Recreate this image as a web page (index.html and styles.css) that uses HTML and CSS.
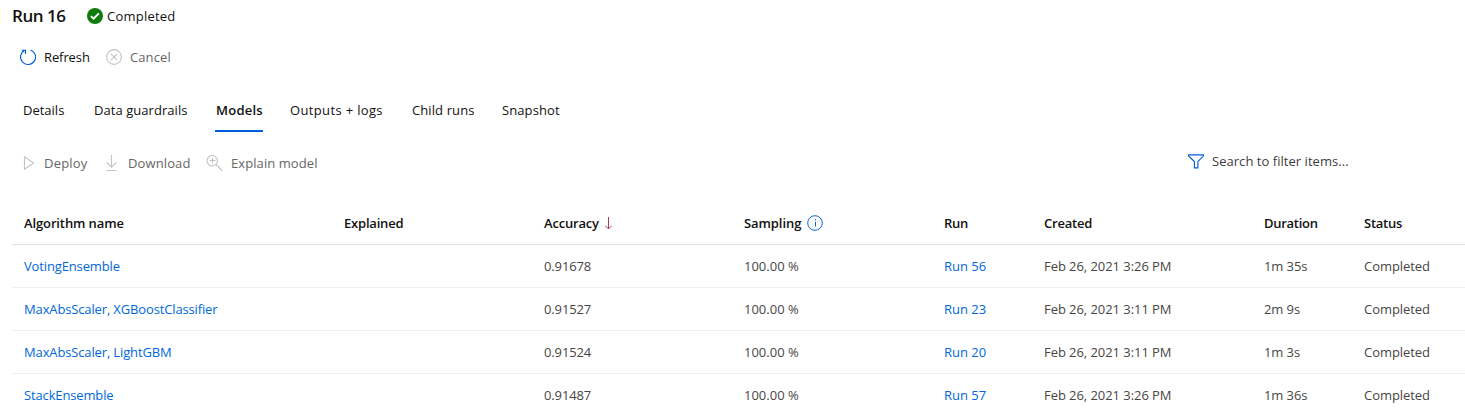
FILE: index.html
```html
<!DOCTYPE html>
<html lang="en">
<head>
<meta charset="utf-8">
<title>Run 16</title>
<link rel="stylesheet" href="styles.css">
</head>
<body>
<header class="title-bar">
  <h1 class="title">Run 16</h1>
  <svg class="status-icon" width="16" height="16" viewBox="0 0 16 16"><circle cx="8" cy="8" r="8" fill="#107c10"/><path d="M3.9 8.1l2.7 2.5 5.2-5.2" fill="none" stroke="#fff" stroke-width="1.9"/></svg>
  <span class="status-text">Completed</span>
</header>
<div class="toolbar run-actions">
  <button class="action refresh"><svg width="16" height="16" viewBox="0 0 16 16" fill="none" stroke="#015cda" stroke-width="1.1"><path d="M10.6.9A7.5 7.5 0 1 1 4.4 1.4M1.8 1.2h3.7v3.7"/></svg><span>Refresh</span></button>
  <button class="action cancel" disabled><svg width="16" height="16" viewBox="0 0 16 16" fill="none" stroke="#c4c4c4" stroke-width="1.1"><circle cx="8" cy="8" r="7.4"/><path d="M4.8 4.8l6.4 6.4M11.2 4.8l-6.4 6.4"/></svg><span>Cancel</span></button>
</div>
<nav class="tabs">
  <a class="tab details">Details</a>
  <a class="tab guardrails">Data guardrails</a>
  <a class="tab models active">Models</a>
  <a class="tab outputs">Outputs + logs</a>
  <a class="tab child">Child runs</a>
  <a class="tab snapshot">Snapshot</a>
</nav>
<div class="list-bar">
  <div class="toolbar">
    <button class="action deploy" disabled><svg width="16" height="16" viewBox="0 0 16 16" fill="none" stroke="#c4c4c4" stroke-width="1.1"><path d="M4.5 1.7v12.6L13.6 8z"/></svg><span>Deploy</span></button>
    <button class="action download" disabled><svg width="16" height="16" viewBox="0 0 16 16" fill="none" stroke="#c4c4c4" stroke-width="1.1"><path d="M8.5 0v12M3.6 7.2l4.9 4.9 4.9-4.9M3.5 15.5h10"/></svg><span>Download</span></button>
    <button class="action explain" disabled><svg width="17" height="16" viewBox="0 0 17 16" fill="none" stroke="#c4c4c4" stroke-width="1.1"><circle cx="6.2" cy="5.7" r="5.2"/><path d="M3.5 5.5h6M6.5 2.8v5.6M10 9.5l6 6"/></svg><span>Explain model</span></button>
  </div>
  <div class="filter"><svg width="16" height="15" viewBox="0 0 16 15" fill="none" stroke="#015cda" stroke-width="1.1"><path d="M.6.9h14.8v1L9.9 7.6v6.3H6.4V7.6L.6 1.9z"/></svg><span>Search to filter items...</span></div>
</div>
<main class="table">
  <div class="row head">
    <span class="h-name">Algorithm name</span><span class="h-explained">Explained</span>
    <span class="with-icon"><span class="h-accuracy">Accuracy</span><svg class="sort" width="8" height="13" viewBox="0 0 8 13" fill="none" stroke="#a4405c"><path d="M4.5 0v11.5M1.3 8.8l3.2 3.2 3-3.2"/></svg></span>
    <span class="with-icon"><span class="h-sampling">Sampling</span><svg class="info" width="16" height="16" viewBox="0 0 16 16" fill="none" stroke="#0a66cc"><circle cx="8" cy="8" r="7.3"/><path d="M8.5 6.7v4.8M8.5 4v1.3"/></svg></span>
    <span class="h-run">Run</span><span class="h-created">Created</span><span class="h-duration">Duration</span><span class="h-status">Status</span>
  </div>
  <div class="row"><a class="name">VotingEnsemble</a><span></span><span class="score">0.91678</span><span>100.00 %</span><a>Run 56</a><span class="date">Feb 26, 2021 3:26 PM</span><span class="time">1m 35s</span><span class="state">Completed</span></div>
  <div class="row"><a class="name">MaxAbsScaler, XGBoostClassifier</a><span></span><span class="score">0.91527</span><span>100.00 %</span><a>Run 23</a><span class="date">Feb 26, 2021 3:11 PM</span><span class="time">2m 9s</span><span class="state">Completed</span></div>
  <div class="row"><a class="name">MaxAbsScaler, LightGBM</a><span></span><span class="score">0.91524</span><span>100.00 %</span><a>Run 20</a><span class="date">Feb 26, 2021 3:11 PM</span><span class="time">1m 3s</span><span class="state">Completed</span></div>
  <div class="row"><a class="name">StackEnsemble</a><span></span><span class="score">0.91487</span><span>100.00 %</span><a>Run 57</a><span class="date">Feb 26, 2021 3:26 PM</span><span class="time">1m 36s</span><span class="state">Completed</span></div>
</main>
</body>
</html>
```
FILE: styles.css
```css
* { box-sizing: border-box; }
body {
  margin: 0;
  height: 413px;
  overflow: hidden;
  background: #fff;
  color: #111;
  font: 13px/20px "Open Sans", "Noto Sans", sans-serif;
  white-space: nowrap;
}
svg { display: block; flex: none; }
.title-bar { display: flex; align-items: center; height: 32px; padding-left: 12px; }
.title { margin: 0; width: 75px; font-size: 17px; font-weight: 600; line-height: 24px; letter-spacing: -0.45px; }
.status-text { margin-left: 4px; letter-spacing: 0.23px; }
.toolbar { display: flex; align-items: center; }
.run-actions { height: 50px; padding-left: 20px; }
.action {
  display: flex;
  align-items: center;
  gap: 8px;
  padding: 0;
  border: 0;
  background: none;
  color: inherit;
  font: inherit;
}
.action:disabled { color: #666; }
.refresh { width: 86px; letter-spacing: -0.1px; }
.cancel { letter-spacing: 0.1px; }
.tabs { display: flex; height: 50px; padding: 18px 0 0 23px; }
.tab { height: 32px; margin-right: 28px; }
.details { width: 43px; }
.guardrails { width: 93px; letter-spacing: 0.05px; }
.models { width: 48px; margin-right: 27px; padding-left: 1px; letter-spacing: 0.25px; }
.tab.active { border-bottom: 2px solid #015cda; font-weight: 600; }
.outputs { width: 94px; letter-spacing: 0.35px; }
.child { width: 62px; letter-spacing: 0.1px; }
.snapshot { letter-spacing: 0.1px; }
.list-bar { display: flex; justify-content: space-between; height: 70px; padding: 0 116px 0 20px; }
.list-bar .toolbar { height: 62px; }
.deploy { width: 83px; letter-spacing: 0.2px; }
.download { width: 103px; gap: 9px; letter-spacing: 0.12px; }
.explain { letter-spacing: 0.08px; }
.filter { display: flex; align-items: center; gap: 8px; height: 58px; width: 161px; color: #404040; letter-spacing: 0.04px; }
.table { margin-left: 12px; }
.row {
  display: grid;
  grid-template-columns: 320px 200px 200px 200px 100px 220px 100px 1fr;
  align-items: center;
  height: 43px;
  padding-left: 12px;
  border-bottom: 1px solid #f1f1f1;
  color: #484644;
}
.row a { color: #0068da; }
.name { letter-spacing: -0.14px; }
.score { letter-spacing: -0.12px; }
.date { letter-spacing: -0.06px; }
.time { letter-spacing: -0.1px; }
.state { letter-spacing: -0.05px; }
.head { border-bottom-color: #e4e4e4; color: #111; font-weight: 600; }
.h-name { letter-spacing: -0.12px; }
.h-explained, .h-accuracy, .h-created { letter-spacing: -0.2px; }
.h-duration, .h-status, .h-run { letter-spacing: -0.27px; }
.h-sampling { width: 59px; letter-spacing: -0.08px; }
.with-icon { display: flex; align-items: center; }
.sort { margin-left: 5px; }
.info { margin-left: 4px; }
```
